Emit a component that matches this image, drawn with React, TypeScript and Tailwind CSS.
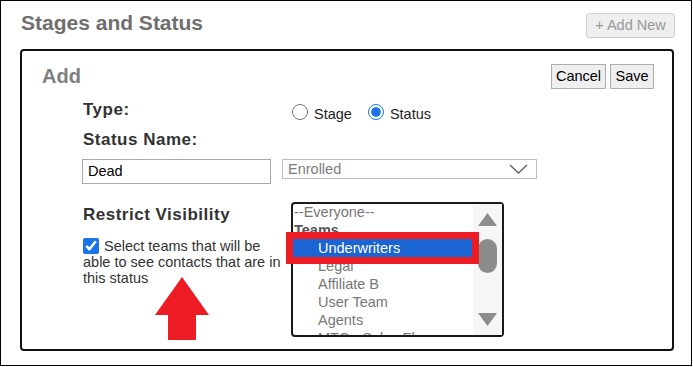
import React from 'react';

const teams = ['Underwriters', 'Legal', 'Affiliate B', 'User Team', 'Agents', 'MTC - Sales Floor'];

const TeamList: React.FC = () => {
  return (
    <div className="relative flex w-[213px] h-[135px] border-2 border-[#1a1a1a] rounded-[4px] bg-white">
      <div className="w-[180px] overflow-hidden">
        <div className="mt-[-1px] text-[14.5px] leading-[18px] text-[#777]">
          <div className="h-[18px] pl-[1px]">--Everyone--</div>
          <div className="h-[18px] pl-[1px] font-bold text-[#555]">Teams</div>
          {teams.map((t, i) => (
            <div
              key={t}
              className={
                i === 0
                  ? 'h-[18px] pl-[25px] bg-[#1b64d3] text-white whitespace-nowrap'
                  : 'h-[18px] pl-[25px] whitespace-nowrap'
              }
            >
              {t}
            </div>
          ))}
        </div>
      </div>
      {/* scrollbar */}
      <div className="flex flex-col items-center w-[29px] bg-[#f6f6f6] pt-[9px] pb-[9px]">
        <svg width="19" height="13" viewBox="0 0 19 13">
          <polygon points="9.5,0 19,13 0,13" fill="#8c8c8c" />
        </svg>
        <div className="mt-[13px] w-[19px] h-[34px] rounded-full bg-[#8c8c8c]" />
        <div className="flex-1" />
        <svg width="19" height="13" viewBox="0 0 19 13">
          <polygon points="0,0 19,0 9.5,13" fill="#8c8c8c" />
        </svg>
      </div>
      {/* annotation box */}
      <div className="absolute left-[-7px] top-[28px] w-[193px] h-[32px] border-[7px] border-[#ed1c24]" />
    </div>
  );
};

export default function App() {
  return (
    <div className="w-[692px] h-[366px] border border-black bg-white font-['Liberation_Sans',Arial,sans-serif]">
      <div className="flex items-start justify-between pl-[20px] pr-[16px] pt-[12px]">
        <h1 className="mt-[-2px] text-[21px] leading-[24px] font-bold text-[#6f6f6f]">Stages and Status</h1>
        <button className="h-[25px] w-[89px] rounded-[3px] border border-[#cfcfcf] bg-[#efefef] text-[14.5px] text-[#999]">
          + Add New
        </button>
      </div>

      <div className="ml-[19px] mt-[11px] w-[654px] h-[302px] border-2 border-[#111] rounded-[4px]">
        <div className="flex items-start justify-between pl-[20px] pr-[18px] pt-[13px]">
          <div className="text-[20px] leading-[25px] font-bold text-[#808080]">Add</div>
          <div className="flex gap-[4px]">
            <button className="h-[25px] w-[55px] border border-[#adadad] bg-[#efefef] text-[14.5px] text-black">
              Cancel
            </button>
            <button className="h-[25px] w-[44px] border border-[#adadad] bg-[#efefef] text-[14.5px] text-black">
              Save
            </button>
          </div>
        </div>

        <div className="pl-[61px]">
          <div className="flex h-[20px] mt-[11px]">
            <div className="w-[199px] text-[17px] leading-[20px] font-bold tracking-[0.5px] text-[#333]">Type:</div>
            <div className="flex items-center gap-[6px] mt-[4px] ml-[10px] h-[16px] text-[14.5px] text-[#222]">
              <label className="flex items-center gap-[6px]">
                <input type="radio" name="type" className="m-0 w-[16px] h-[16px]" />
                <span className="relative top-[3px]">Stage</span>
              </label>
              <label className="flex items-center gap-[6px] ml-[10px]">
                <input type="radio" name="type" defaultChecked className="m-0 w-[16px] h-[16px] accent-[#1a73e8]" />
                <span className="relative top-[3px]">Status</span>
              </label>
            </div>
          </div>

          <div className="mt-[10px] text-[17px] leading-[20px] font-bold tracking-[0.5px] text-[#333]">Status Name:</div>

          <div className="flex items-start mt-[9px] ml-[-1px]">
            <div className="w-[189px] h-[25px] border border-[#a9a9a9] pl-[5px] text-[14.5px] leading-[23px] text-black">
              Dead
            </div>
            <div className="flex items-center justify-between ml-[11px] w-[255px] h-[20px] border border-[#bdbdbd] pl-[5px] pr-[8px] text-[14.5px] text-[#7d7d7d]">
              <span className="leading-[18px]">Enrolled</span>
              <svg width="19" height="10" viewBox="0 0 19 10">
                <polyline points="1,1 9.5,9 18,1" fill="none" stroke="#6b6b6b" strokeWidth="1.6" />
              </svg>
            </div>
          </div>

          <div className="flex mt-[18px]">
            <div className="relative w-[208px]">
              <div className="mt-[3px] text-[17px] leading-[20px] font-bold tracking-[0.5px] text-[#333]">
                Restrict Visibility
              </div>
              <div className="mt-[13px] w-[202px] text-[14.5px] leading-[16px] text-[#333]">
                <input
                  type="checkbox"
                  defaultChecked
                  className="m-0 mr-[5px] w-[16px] h-[16px] align-[-3px] accent-[#1a73e8]"
                />
                Select teams that will be able to see contacts that are in this status
              </div>
              {/* annotation arrow */}
              <svg className="absolute left-[72px] top-[75px]" width="54" height="63" viewBox="0 0 54 63">
                <polygon points="27,0 54,38 41,38 41,63 13,63 13,38 0,38" fill="#ed1c24" />
              </svg>
            </div>
            <TeamList />
          </div>
        </div>
      </div>
    </div>
  );
}
